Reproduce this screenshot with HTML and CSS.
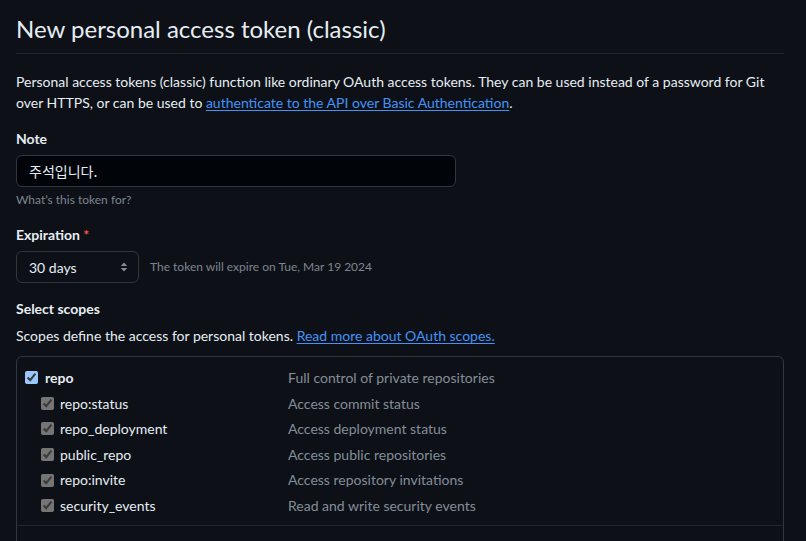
FILE: index.html
```html
<!DOCTYPE html>
<html lang="en">
<head>
<meta charset="utf-8">
<title>New personal access token (classic)</title>
<link rel="stylesheet" href="styles.css">
</head>
<body>
<main class="page">
  <h1 class="subhead">New personal access token (classic)</h1>
  <p class="intro">Personal access tokens (classic) function like ordinary OAuth access tokens. They can be used instead of a password for Git over HTTPS, or can be used to <a href="#">authenticate to the API over Basic Authentication</a>.</p>

  <div class="form-group">
    <label class="label" for="note">Note</label>
    <input class="input" id="note" type="text" value="주석입니다.">
    <p class="note">What’s this token for?</p>
  </div>

  <div class="form-group">
    <div class="label">Expiration <span class="req">*</span></div>
    <div class="expiry">
      <div class="select">
        <span>30 days</span>
        <svg class="arrows" width="8" height="12" viewBox="0 0 8 12"><path d="M4 1.5 7.2 5H.8z" fill="#848d97"/><path d="M4 10.5 7.2 7H.8z" fill="#848d97"/></svg>
      </div>
      <span class="expiry-note">The token will expire on Tue, Mar 19 2024</span>
    </div>
  </div>

  <div class="form-group">
    <div class="label">Select scopes</div>
    <p class="scopes-desc">Scopes define the access for personal tokens. <a href="#">Read more about OAuth scopes.</a></p>
    <div class="scopes">
      <div class="scope-group">
        <div class="scope parent">
          <label class="scope-name"><input type="checkbox" checked><span>repo</span></label>
          <span class="scope-desc">Full control of private repositories</span>
        </div>
        <div class="scope child">
          <label class="scope-name"><input type="checkbox" checked disabled><span>repo:status</span></label>
          <span class="scope-desc">Access commit status</span>
        </div>
        <div class="scope child">
          <label class="scope-name"><input type="checkbox" checked disabled><span>repo_deployment</span></label>
          <span class="scope-desc">Access deployment status</span>
        </div>
        <div class="scope child">
          <label class="scope-name"><input type="checkbox" checked disabled><span>public_repo</span></label>
          <span class="scope-desc">Access public repositories</span>
        </div>
        <div class="scope child">
          <label class="scope-name"><input type="checkbox" checked disabled><span>repo:invite</span></label>
          <span class="scope-desc">Access repository invitations</span>
        </div>
        <div class="scope child">
          <label class="scope-name"><input type="checkbox" checked disabled><span>security_events</span></label>
          <span class="scope-desc">Read and write security events</span>
        </div>
      </div>
      <div class="scope-group empty"></div>
    </div>
  </div>
</main>
</body>
</html>
```
FILE: styles.css
```css
html {
  color-scheme: dark;
}
body {
  margin: 0;
  background: #0d1117;
  color: #e6edf3;
  font-family: Lato, "Noto Sans CJK KR", sans-serif;
  font-size: 14px;
  line-height: 1.5;
  overflow: hidden;
  height: 541px;
}
.page {
  padding: 11px 22px 0 16px;
}
a {
  color: #4493f8;
  text-decoration: underline;
  text-underline-offset: 2px;
}
.subhead {
  margin: 0;
  font-size: 24px;
  font-weight: 400;
  line-height: 36px;
  padding-bottom: 6px;
  border-bottom: 1px solid #21262d;
}
.intro {
  margin: 17px 0 0;
}
.form-group {
  margin-top: 15px;
}
.label {
  display: block;
  font-weight: 700;
  margin-bottom: 6px;
}
.req {
  color: #f85149;
}
.input {
  display: block;
  box-sizing: border-box;
  width: 440px;
  height: 32px;
  padding: 0 12px;
  background: #010409;
  border: 1px solid #30363d;
  border-radius: 6px;
  color: #e6edf3;
  font: inherit;
  font-family: "Noto Sans CJK KR", sans-serif;
}
.note {
  margin: 4px 0 0;
  font-size: 12px;
  color: #7d8590;
}
.expiry {
  display: flex;
  align-items: center;
  gap: 11px;
}
.select {
  box-sizing: border-box;
  width: 123px;
  height: 32px;
  display: flex;
  align-items: center;
  justify-content: space-between;
  padding: 0 10px 0 12px;
  border: 1px solid #30363d;
  border-radius: 6px;
  background: #0d1117;
}
.expiry-note {
  font-size: 12px;
  color: #7d8590;
}
.scopes-desc {
  margin: 0 0 10px;
}
.scopes {
  border: 1px solid #30363d;
  border-radius: 6px;
}
.scope-group {
  padding: 8px 8px 6px;
}
.scope-group + .scope-group {
  border-top: 1px solid #21262d;
}
.scope-group.empty {
  height: 0;
  padding: 0 0 30px;
}
.scope {
  display: grid;
  grid-template-columns: 263px 1fr;
  line-height: 25.6px;
}
.scope-name {
  display: flex;
  align-items: center;
}
.scope-name input {
  margin: 0 7px 0 0;
  width: 13px;
  height: 13px;
}
.parent .scope-name {
  font-weight: 700;
}
.child .scope-name {
  padding-left: 16px;
}
.child .scope-name input {
  margin-right: 6px;
}
.scope-desc {
  color: #848d97;
}
```
